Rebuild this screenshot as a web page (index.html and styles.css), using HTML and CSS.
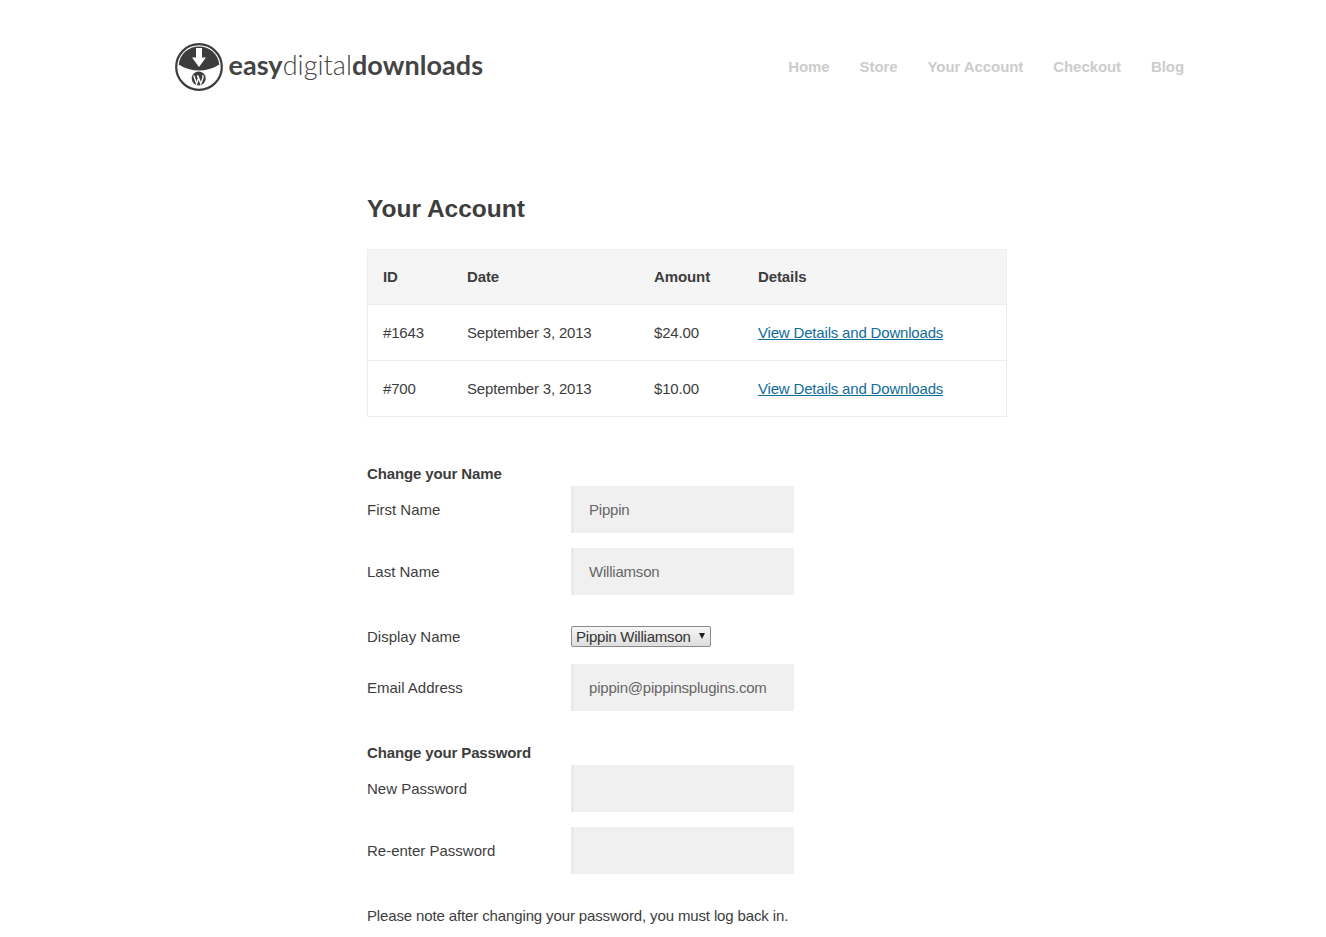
FILE: index.html
```html
<!DOCTYPE html>
<html lang="en">
<head>
<meta charset="utf-8">
<title>Your Account</title>
<link rel="stylesheet" href="styles.css">
</head>
<body>
<header class="site-header">
  <a class="logo" href="#">
    <svg class="logo-mark" width="48" height="48" viewBox="0 0 48 48" aria-hidden="true">
      <circle cx="24" cy="24" r="22.800" fill="#fff" stroke="#3d3d3d" stroke-width="2.200"/>
      <path d="M3.700 21.500C4.800 11 13.500 3.500 24 3.500S43.200 11 44.300 21.500C38 25.500 31 27.500 24 27.500S10 25.500 3.700 21.500Z" fill="#3d3d3d"/>
      <path d="M21 5H27V14.500H31L24 24L17 14.500H21Z" fill="#fff"/>
      <circle cx="23.700" cy="35.500" r="7" fill="#3d3d3d"/>
      <path d="M18.700 32.500L21.600 40.800L23.400 35.500L22.300 32.500M22.700 32.500L25.800 40.800L28 34.800C28.400 33.700 28 32.900 27.400 32.300" fill="none" stroke="#fff" stroke-width="1.400"/>
    </svg>
    <span class="logo-text"><b>easy</b>digital<b>downloads</b></span>
  </a>
  <nav class="main-nav">
    <a href="#">Home</a>
    <a href="#">Store</a>
    <a href="#">Your Account</a>
    <a href="#">Checkout</a>
    <a href="#">Blog</a>
  </nav>
</header>
<main class="content">
  <h1>Your Account</h1>
  <table class="orders">
    <thead>
      <tr><th class="c-id">ID</th><th class="c-date">Date</th><th class="c-amount">Amount</th><th>Details</th></tr>
    </thead>
    <tbody>
      <tr><td>#1643</td><td>September 3, 2013</td><td>$24.00</td><td><a href="#">View Details and Downloads</a></td></tr>
      <tr><td>#700</td><td>September 3, 2013</td><td>$10.00</td><td><a href="#">View Details and Downloads</a></td></tr>
    </tbody>
  </table>
  <form class="profile">
    <h2 class="legend">Change your Name</h2>
    <div class="field"><label for="fn">First Name</label><input id="fn" type="text" value="Pippin"></div>
    <div class="field"><label for="ln">Last Name</label><input id="ln" type="text" value="Williamson"></div>
    <div class="field field-select"><label>Display Name</label><div class="select"><span>Pippin Williamson</span><i class="caret"></i></div></div>
    <div class="field"><label for="em">Email Address</label><input id="em" type="text" value="pippin@pippinsplugins.com"></div>
    <h2 class="legend legend-pw">Change your Password</h2>
    <div class="field"><label for="p1">New Password</label><input id="p1" type="password"></div>
    <div class="field"><label for="p2">Re-enter Password</label><input id="p2" type="password"></div>
    <p class="note">Please note after changing your password, you must log back in.</p>
  </form>
</main>
</body>
</html>
```
FILE: styles.css
```css
* { box-sizing: border-box; }
html, body { margin: 0; padding: 0; }
body {
  height: 937px;
  overflow: hidden;
  background: #fff;
  color: #3d3d3d;
  font-family: "Liberation Sans", Arial, sans-serif;
  font-size: 15px;
  line-height: 20px;
  letter-spacing: -0.13px;
}
.site-header {
  display: flex;
  justify-content: space-between;
  align-items: center;
  height: 134px;
  padding: 0 142px 0 175px;
}
.logo {
  display: flex;
  align-items: center;
  gap: 6px;
  color: #444;
  text-decoration: none;
}
.logo-text {
  position: relative;
  top: -2px;
  left: -0.500px;
  font-family: Lato, sans-serif;
  font-size: 27px;
  font-weight: 300;
  line-height: 34px;
  letter-spacing: 0.050px;
}
.logo-text b { font-weight: 700; }
.main-nav {
  display: flex;
  gap: 30px;
}
.main-nav a {
  color: #ccc;
  font-weight: 700;
  text-decoration: none;
  letter-spacing: -0.08px;
}
.content {
  width: 640px;
  margin-left: 367px;
}
h1 {
  margin: 59px 0 24px;
  font-size: 24.500px;
  line-height: 32px;
  font-weight: 700;
  letter-spacing: 0;
}
.orders {
  width: 640px;
  border-collapse: collapse;
  table-layout: fixed;
  border: 1px solid #eee;
}
.orders th, .orders td {
  padding: 0 15px;
  text-align: left;
  border-bottom: 1px solid #eee;
}
.orders th { height: 55px; background: #f5f5f5; font-weight: 700; letter-spacing: -0.1px; }
.orders td { height: 56px; letter-spacing: -0.18px; }
.c-id { width: 84.500px; }
.c-date { width: 187px; }
.c-amount { width: 104px; }
.orders a { color: #0f6c99; }
.profile { margin-top: 47px; }
.legend {
  margin: 0;
  font-size: 15px;
  line-height: 20px;
  font-weight: 700;
}
.legend-pw { margin-top: 32px; }
.field {
  display: flex;
  align-items: center;
  margin-top: 2px;
  margin-bottom: 15px;
}
.field label { width: 204px; letter-spacing: 0; }
.field input {
  width: 223px;
  height: 47px;
  padding: 0 18px 0 15px;
  border: 0;
  border-left: 3px solid #e9e9e9;
  background: #f0f0f0;
  color: #666;
  font: inherit;
  letter-spacing: -0.21px;
}
.field-select { margin-top: 31px; margin-bottom: 17px; }
.select {
  display: flex;
  align-items: center;
  width: 140px;
  height: 21px;
  padding: 0 5px 0 4px;
  border: 1px solid #8a8a8a;
  border-radius: 2px;
  background: linear-gradient(#f6f6f6, #dedede);
  color: #333;
  letter-spacing: -0.22px;
}
.select span { flex: 1; }
.caret {
  width: 0;
  height: 0;
  margin-bottom: 2px;
  border-left: 3.500px solid transparent;
  border-right: 3.500px solid transparent;
  border-top: 6px solid #222;
}
.note { margin: 32px 0 0; }
```
